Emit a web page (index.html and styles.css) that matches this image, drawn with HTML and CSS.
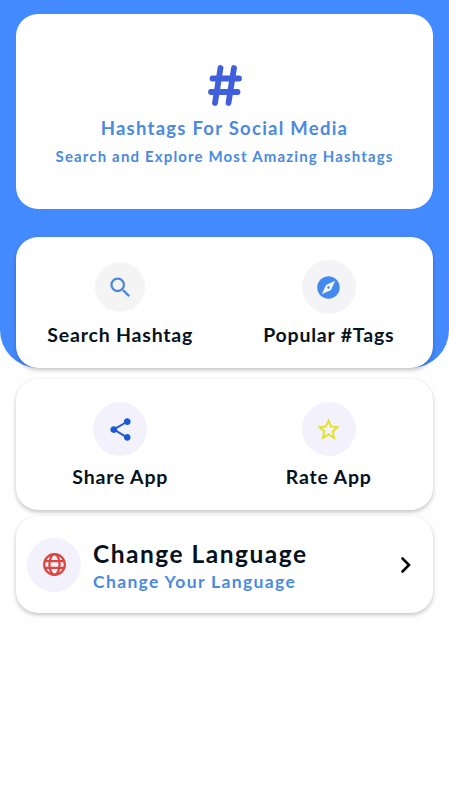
FILE: index.html
```html
<!DOCTYPE html>
<html lang="en">
<head>
    <meta charset="UTF-8">
    <meta name="viewport" content="width=device-width, initial-scale=1.0">
    <title>Hashtags For Social Media</title>
    <link rel="stylesheet" href="styles.css">
</head>
<body>
    <div class="hero">
        <div class="card banner">
            <svg class="logo" viewBox="0 0 36 44">
                <path d="M13.500 5L8 40M27 5L21.500 40M5.500 15.500H32M4 29H30.500"/>
            </svg>
            <h1>Hashtags For Social Media</h1>
            <p>Search and Explore Most Amazing Hashtags</p>
        </div>

        <div class="card menu">
            <a class="item">
                <div class="icon small">
                    <svg viewBox="0 0 24 24" fill="#4a87dc"><path d="M15.500 14h-.79l-.28-.27C15.410 12.590 16 11.110 16 9.500 16 5.910 13.090 3 9.500 3S3 5.910 3 9.500 5.910 16 9.500 16c1.610 0 3.090-.59 4.230-1.570l.27.28v.79l5 4.990L20.490 19l-4.990-5zm-6 0C7.010 14 5 11.990 5 9.500S7.010 5 9.500 5 14 7.010 14 9.500 11.990 14 9.500 14z"/></svg>
                </div>
                <span class="label">Search Hashtag</span>
            </a>
            <a class="item">
                <div class="icon light">
                    <svg viewBox="0 0 24 24" fill="#448aee"><path d="M12 10.900c-.61 0-1.100.49-1.100 1.100s.49 1.100 1.100 1.100c.61 0 1.100-.49 1.100-1.100s-.49-1.100-1.100-1.100zM12 2C6.480 2 2 6.480 2 12s4.480 10 10 10 10-4.480 10-10S17.520 2 12 2zm2.190 12.190L6 18l3.810-8.190L18 6l-3.810 8.190z"/></svg>
                </div>
                <span class="label">Popular #Tags</span>
            </a>
        </div>
    </div>

    <div class="card menu">
        <a class="item">
            <div class="icon">
                <svg viewBox="0 0 24 24" fill="#1a59d6"><path d="M18 16.080c-.76 0-1.440.3-1.960.77L8.910 12.700c.05-.23.09-.46.09-.7s-.04-.47-.09-.7l7.050-4.110c.54.5 1.250.81 2.040.81 1.660 0 3-1.340 3-3s-1.340-3-3-3-3 1.340-3 3c0 .24.04.47.09.7L8.040 9.810C7.500 9.310 6.790 9 6 9c-1.660 0-3 1.340-3 3s1.340 3 3 3c.79 0 1.500-.31 2.040-.81l7.120 4.160c-.05.21-.08.43-.08.65 0 1.610 1.310 2.920 2.920 2.920s2.920-1.310 2.920-2.920-1.310-2.920-2.920-2.920z"/></svg>
            </div>
            <span class="label">Share App</span>
        </a>
        <a class="item">
            <div class="icon">
                <svg viewBox="0 0 24 24" fill="#e2df24"><path d="M22 9.240l-7.190-.62L12 2 9.190 8.630 2 9.240l5.460 4.730L5.820 21 12 17.270 18.180 21l-1.630-7.030L22 9.240zM12 15.400l-3.760 2.270 1-4.280-3.320-2.880 4.380-.38L12 6.100l1.710 4.040 4.380.38-3.320 2.880 1 4.280L12 15.400z"/></svg>
            </div>
            <span class="label">Rate App</span>
        </a>
    </div>

    <div class="card language">
        <div class="icon">
            <svg class="globe" viewBox="0 0 24 24">
                <circle cx="12" cy="12" r="9.200"/>
                <ellipse cx="12" cy="12" rx="4.500" ry="9.200"/>
                <path d="M3.500 9H20.500M3.500 15H20.500"/>
            </svg>
        </div>
        <div class="text">
            <h2>Change Language</h2>
            <p>Change Your Language</p>
        </div>
        <svg class="arrow" viewBox="0 0 12 18"><path d="M2.500 2.500L9 9L2.500 15.500"/></svg>
    </div>
</body>
</html>
```
FILE: styles.css
```css
* {
    box-sizing: border-box;
}

body {
    margin: 0;
    min-height: 100vh;
    background-color: #fefefe;
    font-family: Lato, sans-serif;
    font-weight: bold;
    color: #06121c;
}

h1, h2, p {
    margin: 0;
    white-space: nowrap;
}

.hero {
    height: 368px;
    padding-top: 14px;
    background-color: #448aff;
    border-radius: 0 0 38px 38px;
}

.card {
    margin: 0 16px;
    background: #fff;
    border-radius: 22px;
    box-shadow: 0 2px 4px rgba(0, 0, 0, 0.24);
}

.banner {
    height: 195px;
    margin-bottom: 28px;
    padding-top: 49px;
    display: flex;
    flex-direction: column;
    align-items: center;
    color: #4a8ae0;
    box-shadow: none;
}

.logo {
    width: 36px;
    height: 44px;
    fill: none;
    stroke: #405fdc;
    stroke-width: 5.8;
    stroke-linecap: round;
}

.banner h1 {
    margin-top: 9px;
    font-size: 18.5px;
    line-height: 24px;
    letter-spacing: 1.25px;
}

.banner p {
    margin-top: 6px;
    font-size: 15px;
    line-height: 20px;
    letter-spacing: 1.15px;
}

.menu {
    height: 131px;
    display: flex;
}

.hero + .menu {
    margin-top: 11px;
}

.item {
    width: 50%;
    padding-top: 23px;
    display: flex;
    flex-direction: column;
    align-items: center;
}

.icon {
    width: 54px;
    height: 54px;
    border-radius: 50%;
    background-color: #f3f1fc;
    display: flex;
    align-items: center;
    justify-content: center;
}

.icon.small {
    width: 50px;
    height: 50px;
    margin: 2px 0;
    background-color: #f4f4f5;
}

.icon.light {
    background-color: #f4f4f7;
}

.icon svg {
    width: 27px;
    height: 27px;
}

.label {
    margin-top: 9px;
    font-size: 19.5px;
    line-height: 24px;
    letter-spacing: 0.8px;
    white-space: nowrap;
}

.language {
    height: 97px;
    margin-top: 6px;
    padding: 0 21px 0 11px;
    display: flex;
    align-items: center;
}

.globe {
    fill: none;
    stroke: #dc4540;
    stroke-width: 2;
}

.text {
    flex: 1;
    margin: 4px 0 0 12px;
}

.text h2 {
    font-size: 24.5px;
    line-height: 30px;
    letter-spacing: 1.5px;
}

.text p {
    font-size: 17.5px;
    line-height: 25px;
    letter-spacing: 1.35px;
    color: #4a8ae0;
}

.arrow {
    width: 12px;
    height: 18px;
    fill: none;
    stroke: #06080c;
    stroke-width: 2.6;
    stroke-linecap: round;
}
```
